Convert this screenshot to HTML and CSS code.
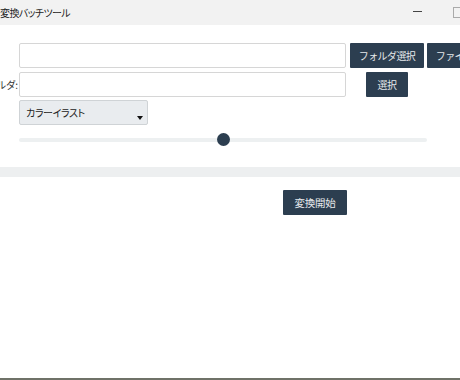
FILE: index.html
```html
<!DOCTYPE HTML>
<html>
<head>
<meta charset="utf-8" />
<title>変換バッチツール</title>
<link rel="stylesheet" href="styles.css">
</head>

<body>
<div class="titlebar">
	<span class="title">変換バッチツール</span>
	<span class="ctrl-min"></span>
	<span class="ctrl-max"></span>
</div>

<div class="form">
	<div class="row">
		<label class="label"></label>
		<input class="field" type="text" />
		<div class="btns">
			<button class="btn btn-wide">フォルダ選択</button>
			<button class="btn btn-wide">ファイル選択</button>
		</div>
	</div>
	<div class="row">
		<label class="label"><span>出力フォルダ:</span></label>
		<input class="field" type="text" />
		<div class="btns btns-center">
			<button class="btn btn-small">選択</button>
		</div>
	</div>
	<div class="row row-select">
		<label class="label"></label>
		<div class="select">
			<span>カラーイラスト</span>
			<i class="caret"></i>
		</div>
	</div>
	<div class="slider">
		<div class="track"></div>
		<div class="thumb" style="left: 50%"></div>
	</div>
</div>

<div class="band"></div>

<div class="actions">
	<button class="btn btn-start">変換開始</button>
</div>
</body>
</html>
```

FILE: styles.css
```css
html, body { margin: 0; padding: 0; }
body {
	width: 460px;
	height: 380px;
	box-sizing: border-box;
	overflow: hidden;
	background: #fff;
	border-bottom: 2px solid #6f7268;
	font-family: "Noto Sans CJK JP", "Noto Sans", sans-serif;
	font-feature-settings: "palt";
	color: #222;
}

.titlebar {
	height: 25px;
	background: #f2f2f2;
	display: flex;
	align-items: center;
	position: relative;
}
	.titlebar .title { font-size: 10px; letter-spacing: -0.6px; }
	.ctrl-min {
		position: absolute;
		left: 413px; top: 11px;
		width: 9px; height: 1px;
		background: #444;
	}
	.ctrl-max {
		position: absolute;
		left: 453px; top: 7px;
		width: 9px; height: 9px;
		border: 1px solid #aaa;
	}

.form { padding-top: 18px; }
.row { display: flex; align-items: center; height: 25px; margin-bottom: 4px; }
.row-select { margin-top: -1px; margin-bottom: 0; }
	.label {
		width: 19px;
		flex: none;
		display: flex;
		justify-content: flex-end;
		overflow: hidden;
		white-space: nowrap;
		font-size: 10px;
		color: #333;
	}
		.label span { padding-right: 1px; }
	.field {
		width: 327px;
		height: 25px;
		box-sizing: border-box;
		margin: 0;
		border: 1px solid #d6d6d6;
		border-radius: 2px;
		background: #fff;
		flex: none;
	}
	.btns { display: flex; gap: 3px; margin-left: 4px; flex: none; }
	.btns-center { width: 74px; justify-content: center; }

.btn {
	height: 25px;
	margin: 0;
	padding: 0;
	border: none;
	border-radius: 1px;
	background: #2c3e50;
	color: #e6e9ec;
	font-family: inherit;
	font-size: 10px;
	letter-spacing: -0.6px;
	flex: none;
}
	.btn-wide { width: 74px; }
	.btn-small { width: 42px; }
	.btn-start { width: 64px; font-size: 10.5px; letter-spacing: -0.3px; }

.select {
	width: 129px;
	height: 25px;
	box-sizing: border-box;
	border: 1px solid #cfd3d6;
	border-radius: 2px;
	background: #e9ecef;
	font-size: 10px;
	letter-spacing: -0.4px;
	padding-left: 6px;
	position: relative;
	display: flex;
	align-items: center;
}
	.caret {
		position: absolute;
		right: 4px; bottom: 4px;
		width: 0; height: 0;
		border-left: 3.5px solid transparent;
		border-right: 3.5px solid transparent;
		border-top: 4px solid #111;
	}

.slider {
	position: relative;
	width: 408px;
	height: 14px;
	margin: 8px 0 0 19px;
}
	.track {
		position: absolute;
		left: 0; right: 0; top: 5px;
		height: 4px;
		background: #edf0f1;
		border-radius: 2px;
	}
	.thumb {
		position: absolute;
		top: 0;
		width: 13px; height: 13px;
		margin-left: -6.5px;
		border-radius: 50%;
		background: #2c3e50;
	}

.band { height: 10px; background: #edeff0; margin-top: 20px; }

.actions { padding: 11px 0 0 283px; }
```
